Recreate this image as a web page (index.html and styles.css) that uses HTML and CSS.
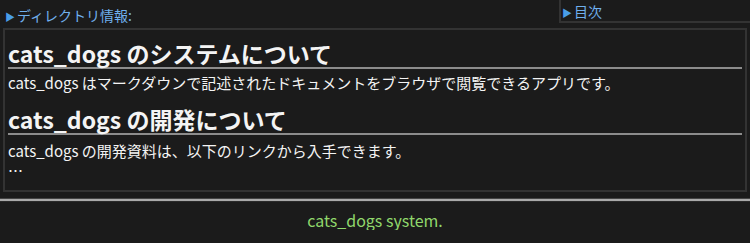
FILE: index.html
```html
<!DOCTYPE html>
<html lang="ja">
<head>
<meta charset="utf-8">
<link rel="stylesheet" href="styles.css">
</head>
<body>
<div class="top">
  <div class="dir"><span class="tri">▶</span>ディレクトリ情報:</div>
  <div class="toc"><span class="tri">▶</span>目次</div>
</div>
<div class="main">
  <h1 class="first">cats_dogs のシステムについて</h1>
  <p>cats_dogs はマークダウンで記述されたドキュメントをブラウザで閲覧できるアプリです。</p>
  <h1>cats_dogs の開発について</h1>
  <p>cats_dogs の開発資料は、以下のリンクから入手できます。<br>…</p>
</div>
<hr class="rule">
<footer class="foot">cats_dogs system.</footer>
</body>
</html>
```
FILE: styles.css
```css
html, body {
  margin: 0;
  background: #1b1b1b;
  color: #f4f4f4;
  font-family: "Noto Sans CJK JP", "Noto Sans", sans-serif;
}
.top {
  display: flex;
  justify-content: space-between;
  align-items: flex-start;
  height: 22px;
}
.dir {
  color: #70b0ee;
  font-size: 14px;
  line-height: 16px;
  padding: 7px 0 0 5px;
}
.tri {
  font-size: 10px;
  margin-right: 2px;
  color: #4a9ee8;
}
.toc {
  width: 188px;
  color: #70b0ee;
  font-size: 14px;
  line-height: 16px;
  padding: 3px 0 0 1px;
  border-left: 2px solid #333;
  border-bottom: 2px solid #333;
}
.main {
  margin: 6px 3px 0;
  border: 2px solid #333;
  padding: 0 3px 9px;
}
h1 {
  font-size: 23px;
  font-weight: bold;
  line-height: 24px;
  margin: 14px 0 0;
  padding-bottom: 2px;
  border-bottom: 2px solid #8c8c8c;
}
h1.first {
  margin-top: 11px;
}
p {
  font-size: 15px;
  line-height: 20px;
  margin: 0;
  padding-top: 4px;
}
p + h1 + p {
  padding-top: 6px;
}
.rule {
  margin: 6px 0 0;
  border: 0;
  border-top: 1px solid #444;
  height: 2px;
  background: #aaa;
  border-bottom: 1px solid #2a2a2a;
}
.foot {
  text-align: center;
  color: #90d86c;
  font-size: 16px;
  line-height: 20px;
  padding-top: 8px;
}
```
